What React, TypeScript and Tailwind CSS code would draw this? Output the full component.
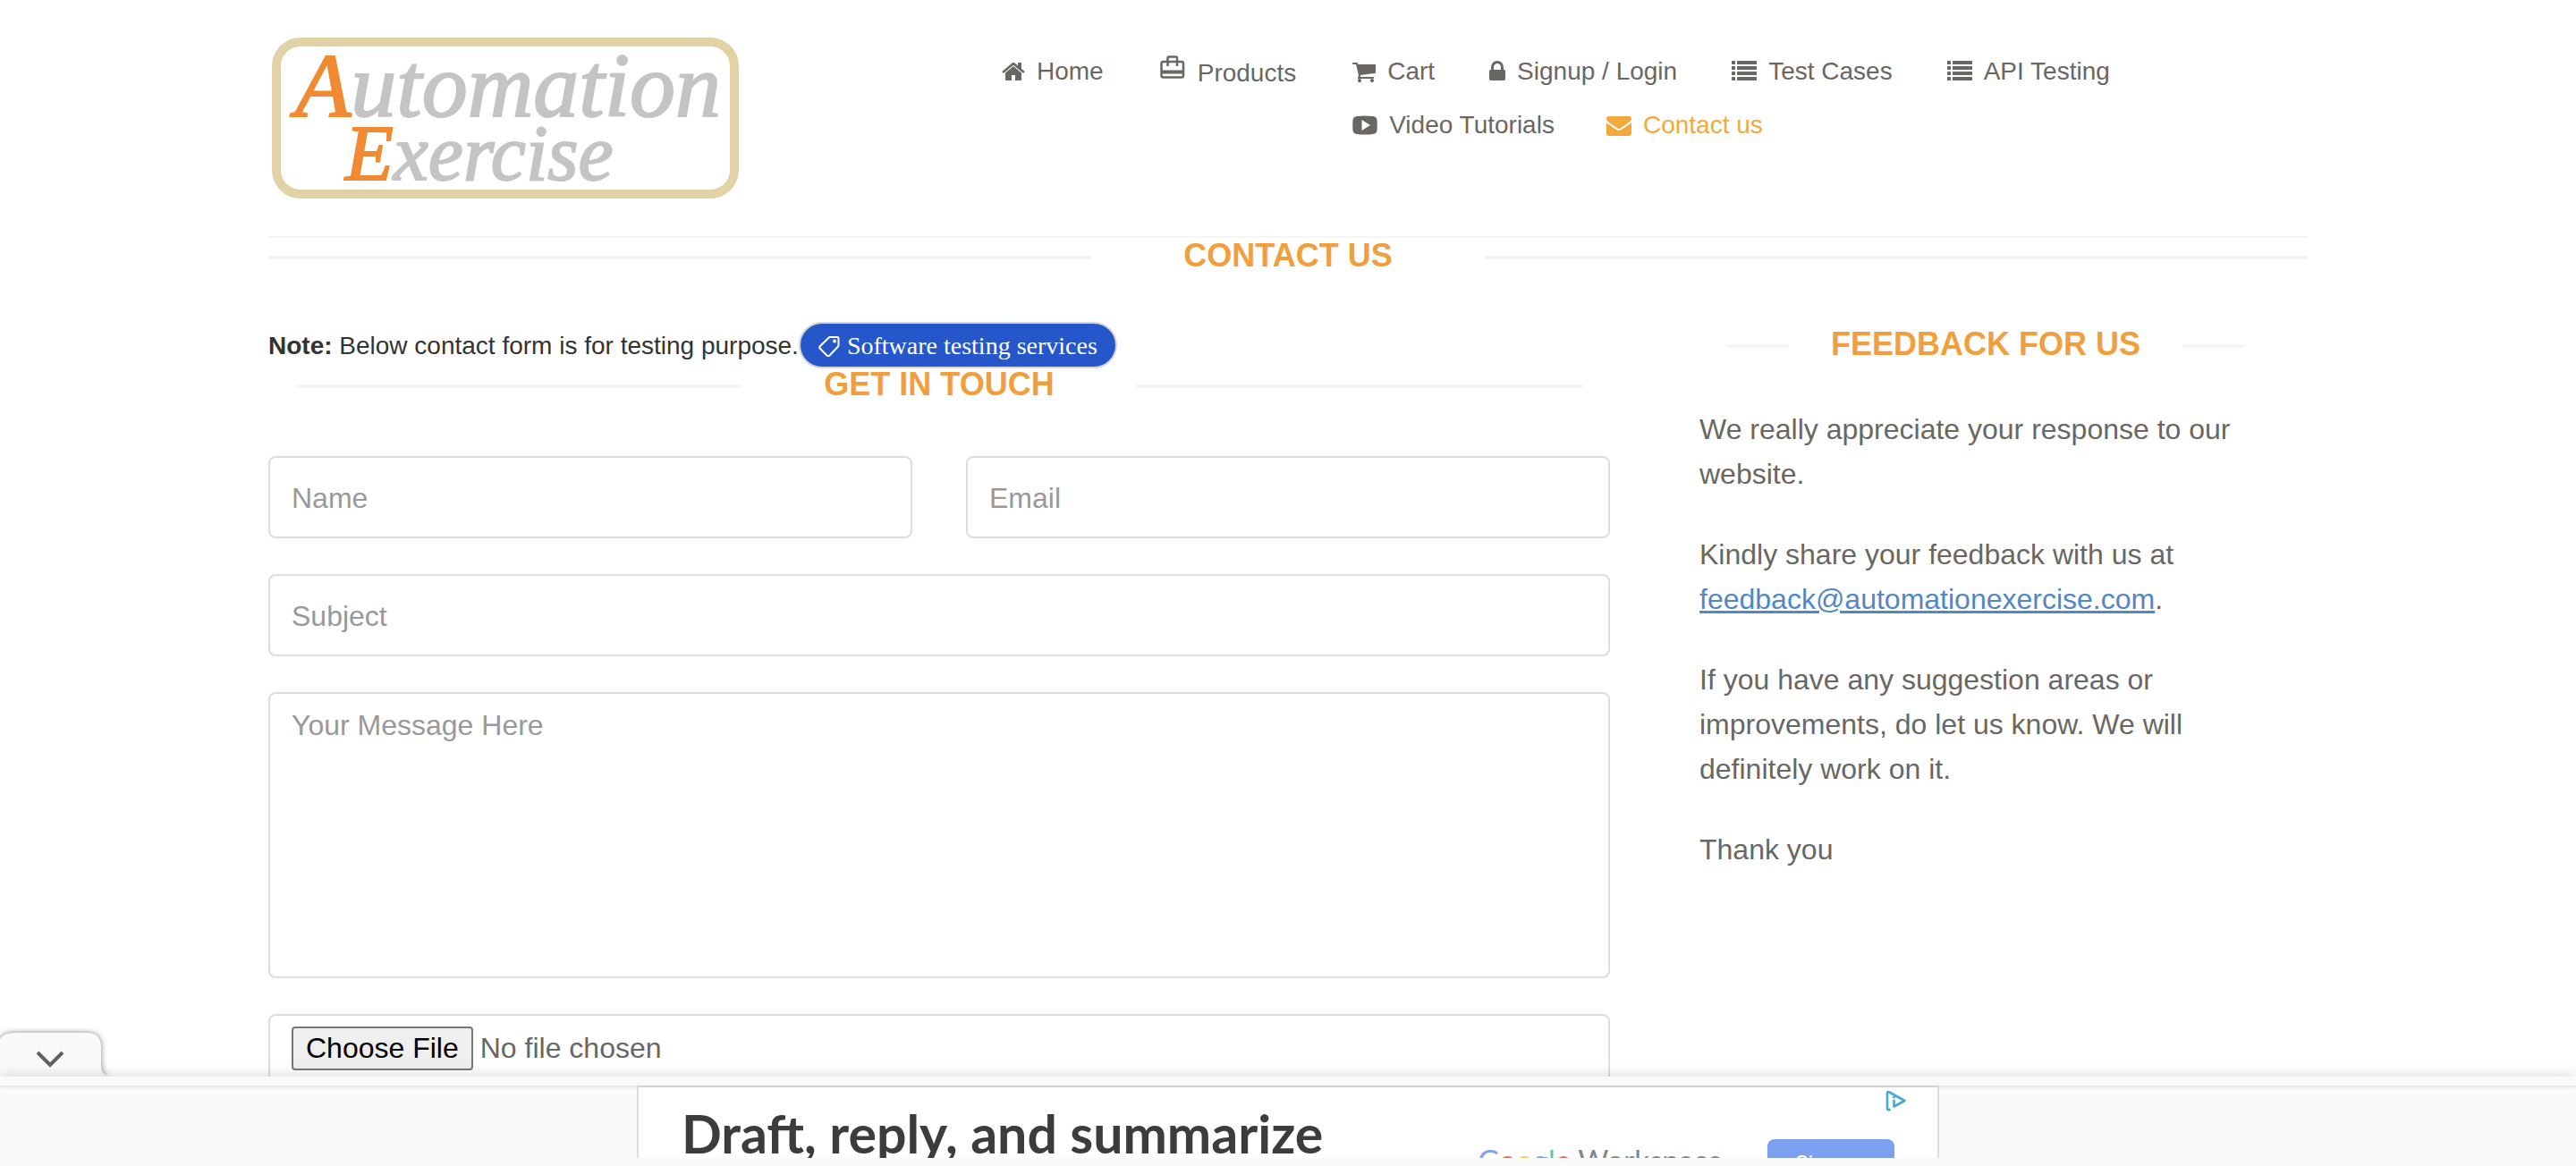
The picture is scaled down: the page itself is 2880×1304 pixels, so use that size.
import type { ReactNode } from 'react';

function HomeIcon() {
  return (
    <svg viewBox="64 0 1664 1792" className="h-7 w-[26px]" fill="currentColor" aria-hidden="true">
      <path d="M1472 992v480q0 26-19 45t-45 19h-384v-384h-256v384h-384q-26 0-45-19t-19-45v-480q0-1 .5-3t.5-3l575-474 575 474q1 2 1 6zm223-69l-62 74q-8 9-21 11h-3q-13 0-21-7l-692-577-692 577q-12 8-24 7-13-2-21-11l-62-74q-8-10-7-23.500t11-21.500l719-599q32-26 76-26t76 26l244 204v-195q0-14 9-23t23-9h192q14 0 23 9t9 23v408l219 182q10 8 11 21.500t-7 23.500z" />
    </svg>
  );
}

function CartIcon() {
  return (
    <svg viewBox="64 0 1664 1792" className="h-7 w-[26px]" fill="currentColor" aria-hidden="true">
      <path d="M704 1536q0 52-38 90t-90 38-90-38-38-90 38-90 90-38 90 38 38 90zm896 0q0 52-38 90t-90 38-90-38-38-90 38-90 90-38 90 38 38 90zm128-1088v512q0 24-16.500 42.500t-40.500 21.500l-1044 122q13 60 13 70 0 16-24 64h920q26 0 45 19t19 45-19 45-45 19h-1024q-26 0-45-19t-19-45q0-11 8-31.500t16-36 21.500-40 15.500-29.500l-177-823h-204q-26 0-45-19t-19-45 19-45 45-19h256q16 0 28.500 6.500t19.500 15.500 13 24.500 8 26 5.500 29.500 4.500 26h1201q26 0 45 19t19 45z" />
    </svg>
  );
}

function LockIcon() {
  return (
    <svg viewBox="320 0 1152 1792" className="h-7 w-[18px]" fill="currentColor" aria-hidden="true">
      <path d="M640 768h512v-192q0-106-75-181t-181-75-181 75-75 181v192zm832 96v576q0 40-28 68t-68 28h-960q-40 0-68-28t-28-68v-576q0-40 28-68t68-28h32v-192q0-184 132-316t316-132 316 132 132 316v192h32q40 0 68 28t28 68z" />
    </svg>
  );
}

function EnvelopeIcon() {
  return (
    <svg viewBox="0 0 1792 1792" className="h-7 w-7" fill="currentColor" aria-hidden="true">
      <path d="M1792 710v794q0 66-47 113t-113 47h-1472q-66 0-113-47t-47-113v-794q44 49 101 87 362 246 497 345 57 42 92.500 65.500t94.500 48 110 24.500h2q51 0 110-24.500t94.500-48 92.500-65.500q170-123 498-345 57-39 100-87zm0-294q0 79-49 151t-122 123q-376 261-468 325-10 7-42.500 31t-54 38.500-52 32.500-57.500 27-50 9h-2q-23 0-50-9t-57.500-27-52-32.500-54-38.500-42.500-31q-91-64-262-182.500t-205-142.500q-62-42-117-115.500t-55-136.500q0-78 41.500-130t118.500-52h1472q65 0 112.500 47t47.500 113z" />
    </svg>
  );
}

function ListIcon() {
  return (
    <svg viewBox="0 0 28 24" className="h-6 w-7" fill="currentColor" aria-hidden="true">
      {[0, 6, 12, 18].map((y) => (
        <g key={y}>
          <rect x="0" y={y} width="4" height="4" rx="0.5" />
          <rect x="6" y={y} width="22" height="4" rx="0.5" />
        </g>
      ))}
    </svg>
  );
}

function VideoIcon() {
  return (
    <svg viewBox="0 0 28 22" className="h-[22px] w-7" fill="currentColor" aria-hidden="true">
      <path
        fillRule="evenodd"
        d="M5 1Q14 0 23 1Q27 1.500 27.500 5Q28 11 27.500 17Q27 20.500 23 21Q14 22 5 21Q1 20.500 0.500 17Q0 11 0.500 5Q1 1.500 5 1ZM10.500 5V17L20 11Z"
      />
    </svg>
  );
}

function BagIcon() {
  return (
    <svg viewBox="0 0 28 26" className="mt-0.5 h-[26px] w-7" fill="none" stroke="currentColor" strokeWidth="2.500" aria-hidden="true">
      <rect x="1.500" y="7" width="24.500" height="17.500" rx="2" />
      <path d="M8.500 12V3Q8.500 1.500 10 1.500H17.500Q19 1.500 19 3V12" />
      <path d="M1.500 18.500H26" strokeWidth="4" />
    </svg>
  );
}

function TagIcon() {
  return (
    <svg viewBox="0 0 24 24" className="h-6 w-6" fill="none" stroke="currentColor" strokeWidth="2" strokeLinejoin="round" aria-hidden="true">
      <path d="M13 2H21Q22.500 2 22.500 3.500V11Q22.500 12 22 12.500L12.500 22.500Q11 24 9.500 22.500L2 15Q0.500 13.500 2 12L11.500 2.700Q12 2 13 2Z" />
      <circle cx="18" cy="6.500" r="1" />
    </svg>
  );
}

function NavItem({ icon, label, active }: { icon: ReactNode; label: string; active?: boolean }) {
  return (
    <li>
      <a
        href="#"
        className={
          active
            ? 'flex items-center gap-[13px] leading-[40px] whitespace-nowrap text-[#f2a93b]'
            : 'flex items-center gap-[13px] leading-[40px] whitespace-nowrap text-[#696763]'
        }
      >
        {icon}
        {label}
      </a>
    </li>
  );
}

function Title({ children }: { children: ReactNode }) {
  return (
    <div className="flex items-start">
      <div className="mt-5 h-1 flex-1 bg-[#f5f5f5]" />
      <h2 className="w-[440px] text-center text-[36px] leading-[40px] font-bold text-[#f09f3c]">{children}</h2>
      <div className="mt-5 h-1 flex-1 bg-[#f5f5f5]" />
    </div>
  );
}

const field =
  'block w-full rounded-lg border-2 border-[#dddddd] bg-white px-6 text-[32px] text-[#696763] placeholder:text-[#999999]';

function Logo() {
  return (
    <a
      href="#"
      aria-label="Automation Exercise"
      className="block h-[180px] w-[522px] rounded-[32px] border-[10px] border-[#e2d3a7] pt-1.5 pl-4 font-['Liberation_Serif',serif] text-[#c4c4c4] italic [-webkit-text-stroke:2px]"
    >
      <span className="block text-[102px] leading-[76px]">
        <span className="text-[#f18a33]">A</span>utomation
      </span>
      <span className="block pl-14 text-[88px] leading-[76px]">
        <span className="text-[#f18a33]">E</span>xercise
      </span>
    </a>
  );
}

export default function App() {
  return (
    <div className="h-screen overflow-hidden bg-white font-['Liberation_Sans',Arial,sans-serif]">
      <div className="mx-auto max-w-[2340px] px-[30px]">
        <header className="grid grid-cols-[1fr_2fr] border-b-2 border-[#f5f5f5] pb-[42px]">
          <div className="pt-[42px] pl-1">
            <Logo />
          </div>
          <nav className="pt-[60px] pl-[60px] text-[28px]">
            <ul className="flex items-start gap-[63px]">
              <NavItem icon={<HomeIcon />} label="Home" />
              <li>
                <a href="#" className="flex items-start gap-[14px] leading-[44px] text-[#696763]">
                  <BagIcon />
                  Products
                </a>
              </li>
              <li>
                <ul className="flex gap-[61px]">
                  <NavItem icon={<CartIcon />} label="Cart" />
                  <NavItem icon={<LockIcon />} label="Signup / Login" />
                  <NavItem icon={<ListIcon />} label="Test Cases" />
                  <NavItem icon={<ListIcon />} label="API Testing" />
                </ul>
                <ul className="mt-5 flex gap-[58px]">
                  <NavItem icon={<VideoIcon />} label="Video Tutorials" />
                  <NavItem active icon={<EnvelopeIcon />} label="Contact us" />
                </ul>
              </li>
            </ul>
          </nav>
        </header>

        <Title>CONTACT US</Title>

        <main className="grid grid-cols-[1500fr_640fr] gap-[100px] pt-[54px] pr-10">
          <section>
            <p className="flex items-center text-[28px] leading-[50px] whitespace-nowrap text-[#333333]">
              <span className="pt-0.5">
                <strong>Note:</strong> Below contact form is for testing purpose.
              </span>
              <a
                href="#"
                className="flex items-center gap-2 rounded-full border-2 border-[#d5d5d5] bg-[#2557cb] px-5 pt-0.5 font-['Liberation_Serif',serif] leading-[46px] text-white"
              >
                <TagIcon />
                Software testing services
              </a>
            </p>
            <div className="-mt-0.5 px-[30px]">
              <Title>GET IN TOUCH</Title>
            </div>
            <form className="mt-[60px] grid grid-cols-2 gap-x-[60px] gap-y-10">
              <input aria-label="Name" placeholder="Name" className={`${field} h-[92px] pt-0.5`} />
              <input aria-label="Email" placeholder="Email" className={`${field} h-[92px] pt-0.5`} />
              <input aria-label="Subject" placeholder="Subject" className={`${field} col-span-2 h-[92px] pt-0.5`} />
              <textarea
                aria-label="Your Message"
                placeholder="Your Message Here"
                className={`${field} col-span-2 h-[320px] resize-none py-3 leading-[46px]`}
              />
              <input
                type="file"
                aria-label="Upload file"
                className={`${field} col-span-2 h-[92px] py-3 leading-[37px] file:me-2 file:rounded-sm file:border-2 file:border-solid file:border-[#767676] file:bg-[#efefef] file:px-[14px] file:py-1 file:leading-[37px] file:text-black`}
              />
            </form>
          </section>

          <aside className="pt-[5px]">
            <div className="px-[30px]">
              <Title>FEEDBACK FOR US</Title>
            </div>
            <div className="mt-[50px] space-y-10 text-[32px] leading-[50px] text-[#696763]">
              <p>We really appreciate your response to our website.</p>
              <p>
                Kindly share your feedback with us at{' '}
                <a href="#" className="text-[#5087c7] underline">
                  feedback@automationexercise.com
                </a>
                .
              </p>
              <p>If you have any suggestion areas or improvements, do let us know. We will definitely work on it.</p>
              <p>Thank you</p>
            </div>
          </aside>
        </main>
      </div>

      <div className="fixed inset-x-0 bottom-0">
        <button type="button" aria-label="Collapse" className="block">
          <svg viewBox="0 0 130 50" className="block h-[50px] w-[130px] overflow-visible" aria-hidden="true">
            <path
              d="M-4 50V16Q0 1 16 1H97Q113 1 113 17V38Q114 50 124 50Z"
              fill="#fafafa"
              className="drop-shadow-[0_0_3px_rgba(0,0,0,0.5)]"
            />
            <path d="M42 23L56 37L70 23" fill="none" stroke="#616161" strokeWidth="4" />
          </svg>
        </button>
        <div className="relative h-[10px] bg-[#fafafa] shadow-[0_0_16px_rgba(0,0,0,0.2)]" />
        <div className="relative bg-[#fafafa] pb-[9px] shadow-[inset_0_4px_4px_-3px_rgba(0,0,0,0.15)]">
          <div className="mx-auto flex h-[81px] w-[1456px] items-start overflow-hidden border-2 border-b-0 border-[#dddddd] border-t-[#d0d0d0] bg-white pl-12">
            <p className="flex-1 pt-[17px] font-['Lato',sans-serif] text-[59px] leading-[70px] font-bold whitespace-nowrap text-[#3c3c3c]">
              Draft, reply, and summarize
            </p>
            <p className="mr-[50px] pt-[61px] font-['Lato',sans-serif] text-[33px] leading-[40px] whitespace-nowrap text-[#80868b]">
              <span className="text-[#7da1f1]">G</span>
              <span className="text-[#e57368]">o</span>
              <span className="text-[#f5cd62]">o</span>
              <span className="text-[#7da1f1]">g</span>
              <span className="text-[#81b988]">l</span>
              <span className="text-[#e57368]">e</span> Workspace
            </p>
            <button
              type="button"
              className="mt-[58px] h-[54px] w-[142px] rounded-lg bg-[#7d9ff0] font-[Roboto,sans-serif] text-[24px] leading-[28px] text-white"
            >
              Sign up
            </button>
            <svg viewBox="0 0 24 24" className="mt-[3px] mr-[34px] -ml-2.5 h-6 w-6" fill="none" stroke="#4ba8cb" strokeWidth="2.600" aria-hidden="true">
              <path d="M5.500 21.500Q2 23.500 2 20.500V3.500Q2 1 4.500 2.500L21.500 12L9.500 18.500V11" strokeLinejoin="round" />
              <path d="M9.500 7V9.500" />
            </svg>
          </div>
        </div>
      </div>
    </div>
  );
}
